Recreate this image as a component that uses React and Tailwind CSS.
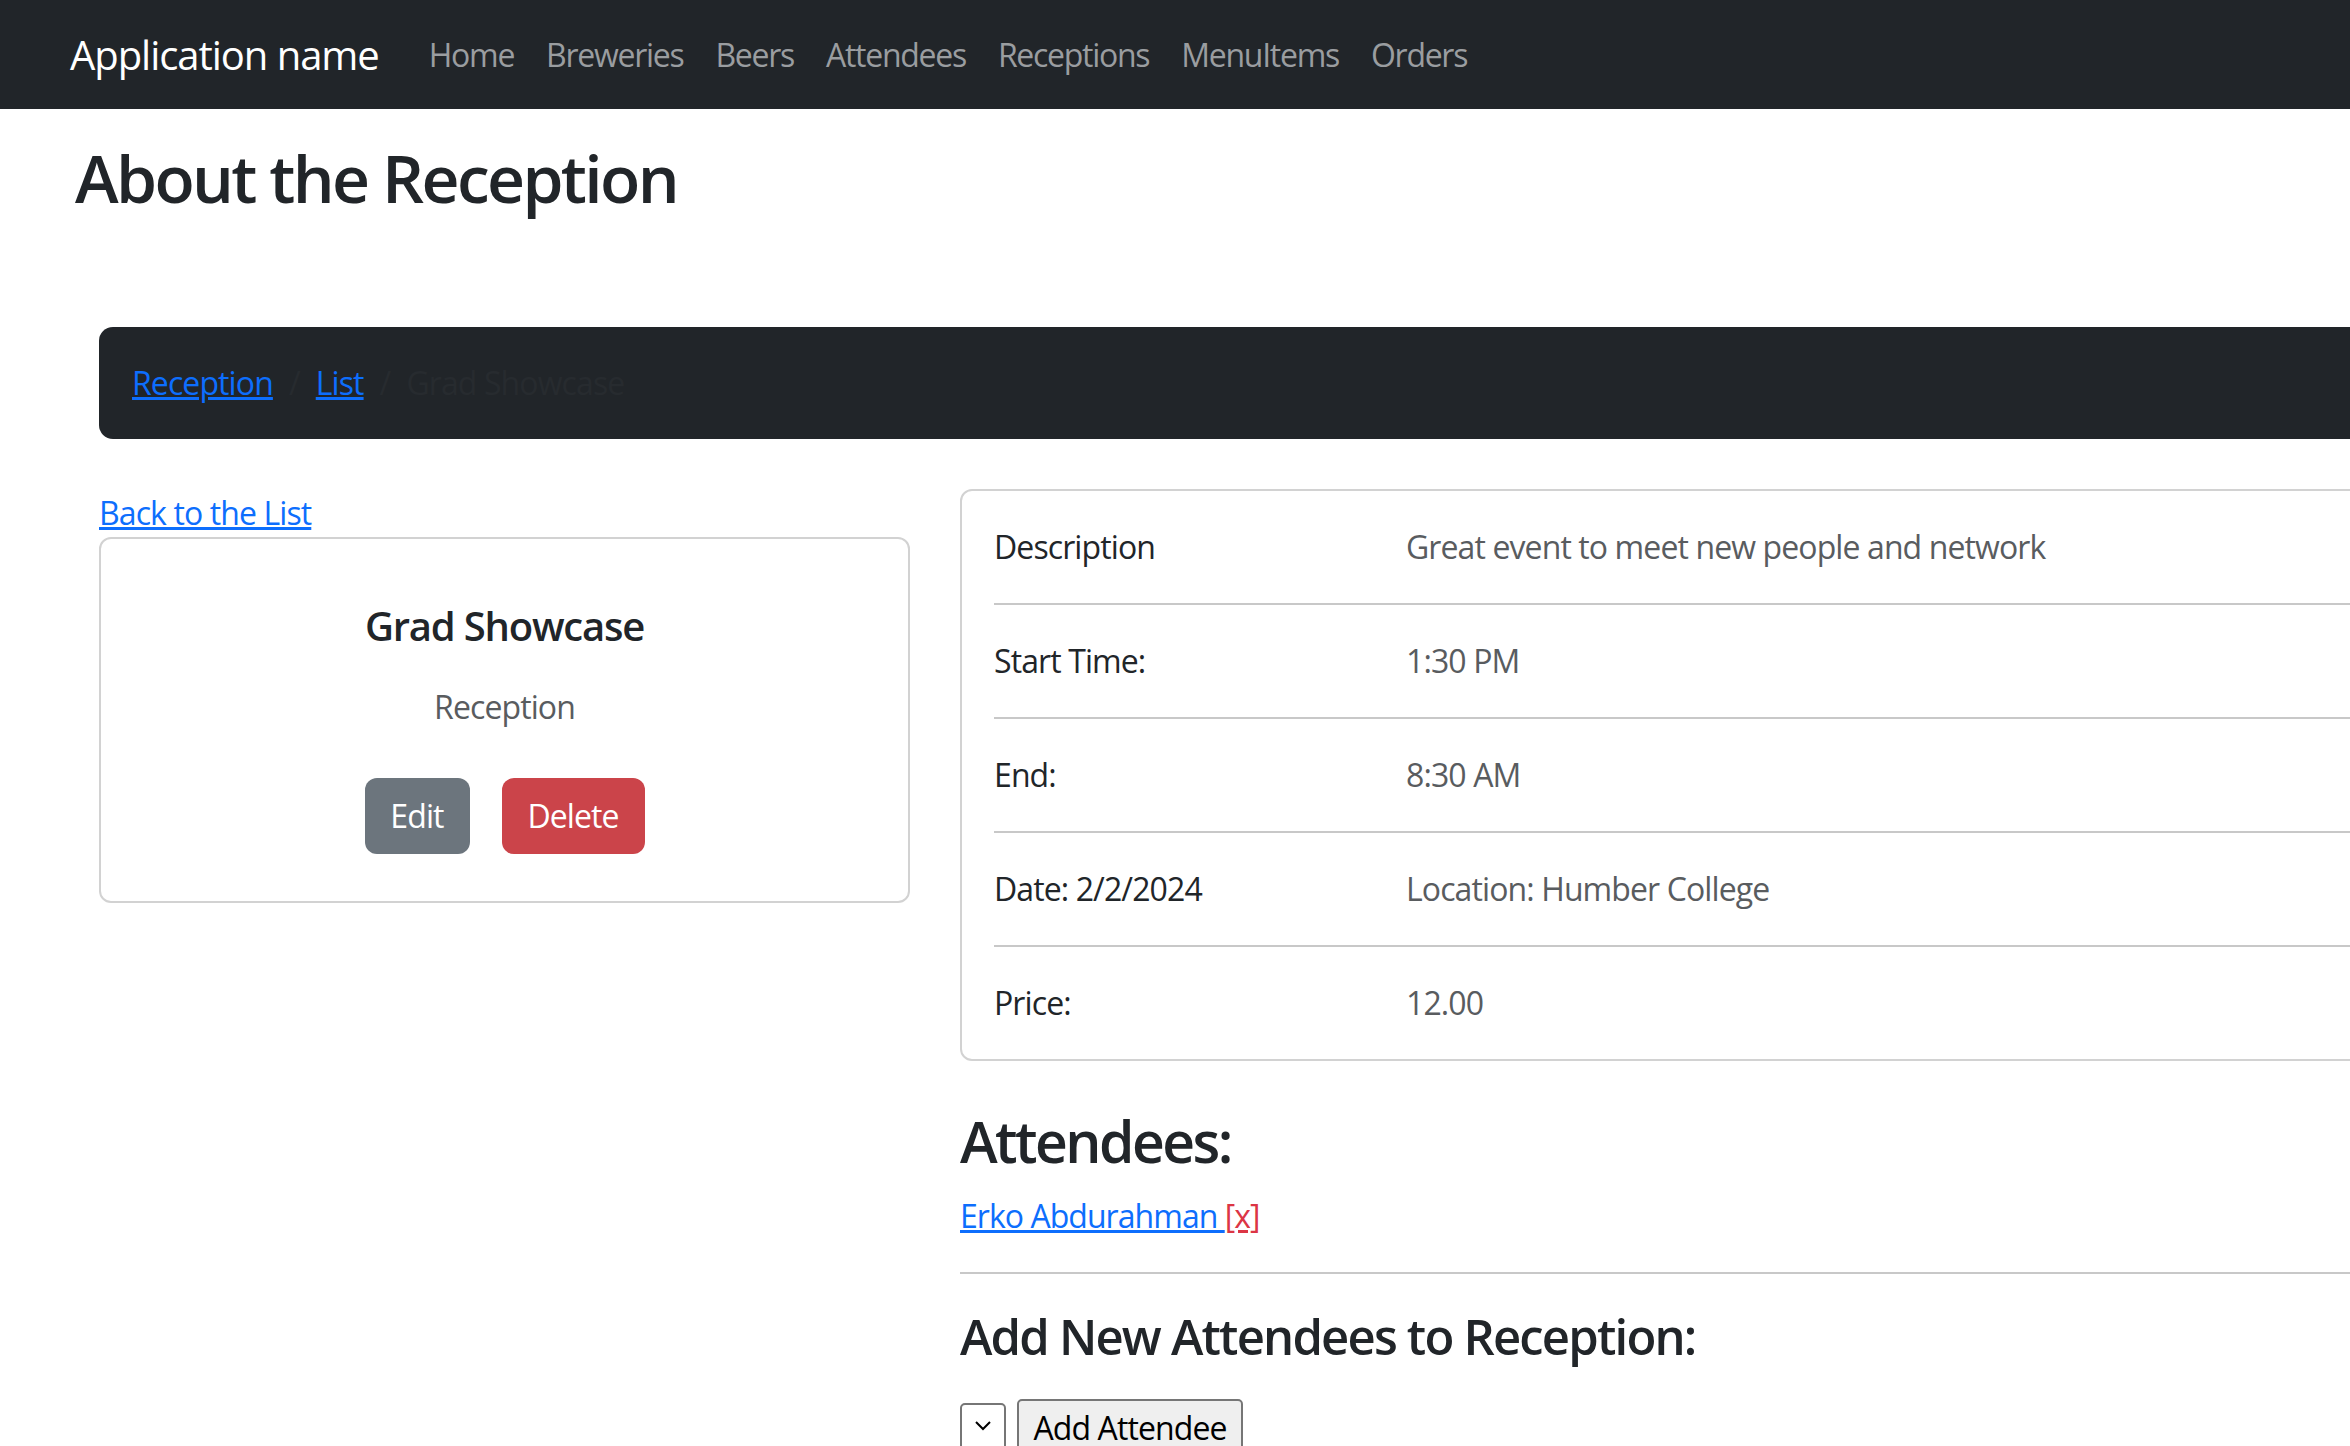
import React from "react";

const navLinks = ["Home", "Breweries", "Beers", "Attendees", "Receptions", "MenuItems", "Orders"];

const details = [
  { label: "Description", value: "Great event to meet new people and network" },
  { label: "Start Time:", value: "1:30 PM" },
  { label: "End:", value: "8:30 AM" },
  { label: "Date: 2/2/2024", value: "Location: Humber College" },
  { label: "Price:", value: "12.00" },
];

const DetailRow = ({ label, value }) => (
  <div className="flex text-[32px] leading-[48px] tracking-[-0.028em]">
    <div className="w-[412px] shrink-0 text-[#212529]">{label}</div>
    <div className="text-[#595c5f]">{value}</div>
  </div>
);

export default function App() {
  return (
    <div className="min-h-screen w-full overflow-hidden bg-white font-['Open_Sans',sans-serif] text-[#212529]">
      {/* top navbar */}
      <nav className="flex h-[109px] items-center bg-[#212529] pl-[70px]">
        <a href="#" className="text-[40px] leading-[60px] tracking-[-0.026em] text-white">
          Application name
        </a>
        <ul className="ml-[50px] flex gap-[32px] text-[32px] leading-[48px] tracking-[-0.04em] text-[#9a9da0]">
          {navLinks.map((link) => (
            <li key={link}>
              <a href="#">{link}</a>
            </li>
          ))}
        </ul>
      </nav>

      <main>
        <h1 className="ml-[75px] mt-[29px] text-[66px] font-semibold leading-[79px] tracking-[-0.04em]">About the Reception</h1>

        {/* breadcrumb */}
        <ol className="ml-[99px] mt-[110px] flex h-[112px] w-[2530px] items-center rounded-[14px] bg-[#212529] pl-[33px] text-[32px] leading-[48px] tracking-[-0.028em]">
          <li>
            <a href="#" className="text-[#0d6efd] underline">Reception</a>
          </li>
          <li className="px-[16px] text-[#272b2f]">/</li>
          <li>
            <a href="#" className="text-[#0d6efd] underline">List</a>
          </li>
          <li className="px-[16px] text-[#272b2f]">/</li>
          <li className="text-[#272b2f]">Grad Showcase</li>
        </ol>

        <div className="ml-[99px] mt-[50px] flex gap-[50px]">
          {/* left column */}
          <div className="w-[811px] shrink-0">
            <div className="text-[32px] leading-[48px] tracking-[-0.028em]">
              <a href="#" className="text-[#0d6efd] underline">Back to the List</a>
            </div>
            <div className="h-[366px] rounded-[12px] border-2 border-[#d2d2d2] pt-[62px] text-center">
              <h5 className="text-[40px] font-semibold leading-[50px] tracking-[-0.03em]">Grad Showcase</h5>
              <p className="mt-[32px] text-[32px] leading-[48px] tracking-[-0.028em] text-[#595c5f]">Reception</p>
              <div className="mt-[47px] flex justify-center gap-[32px]">
                <button className="h-[76px] w-[105px] rounded-[12px] bg-[#6c757d] text-[32px] tracking-[-0.028em] text-white">
                  Edit
                </button>
                <button className="h-[76px] w-[143px] rounded-[12px] bg-[#cb444a] text-[32px] tracking-[-0.028em] text-white">
                  Delete
                </button>
              </div>
            </div>
          </div>

          {/* right column */}
          <div className="w-[1670px] shrink-0">
            <div className="rounded-[12px] border-2 border-[#d2d2d2] p-[32px]">
              {details.map((row, i) => (
                <div key={row.label}>
                  {i > 0 && <hr className="my-[32px] border-t-2 border-[#c8c8c8]" />}
                  <DetailRow label={row.label} value={row.value} />
                </div>
              ))}
            </div>

            <h2 className="mt-[45px] text-[57px] font-semibold leading-[70px] tracking-[-0.045em]">Attendees:</h2>
            <div className="mt-[16px] text-[32px] leading-[48px] tracking-[-0.03em]">
              <a href="#" className="text-[#0d6efd] underline">Erko Abdurahman </a>
              <a href="#" className="text-[#dc3545] underline">[x]</a>
            </div>
            <hr className="my-[32px] border-t-2 border-[#c8c8c8]" />

            <h3 className="text-[49px] font-semibold leading-[60px] tracking-[-0.037em]">Add New Attendees to Reception:</h3>
            <form className="mt-[33px] flex items-start gap-[11px]">
              <div className="mt-[4px] flex h-[52px] w-[46px] justify-center rounded-[5px] border-2 border-[#767676] bg-white pt-[14px]">
                <svg width="20" height="14" viewBox="0 0 20 14" fill="none">
                  <polyline points="3,3 10,10 17,3" stroke="#000" strokeWidth="2" />
                </svg>
              </div>
              <button
                type="button"
                className="h-[56px] w-[226px] rounded-[5px] border-2 border-[#767676] bg-[#efefef] pt-[2px] text-[32px] leading-[48px] tracking-[-0.028em] text-black"
              >
                Add Attendee
              </button>
            </form>
          </div>
        </div>
      </main>
    </div>
  );
}
